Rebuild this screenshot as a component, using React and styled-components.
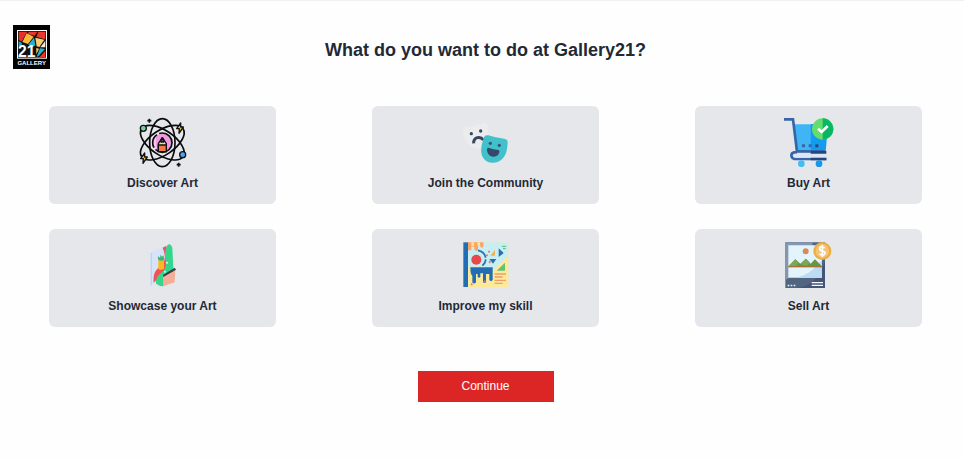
import React from "react";
import styled, { createGlobalStyle } from "styled-components";

const GlobalStyle = createGlobalStyle`
  *, *::before, *::after { box-sizing: border-box; }
  body {
    margin: 0;
    background: #fefefe;
    color: #1f2937;
    font-family: "Liberation Sans", Arial, sans-serif;
  }
`;

const Page = styled.main`
  border-top: 1px solid #f1f1f2;
  padding-bottom: 56px;
`;

const Header = styled.header`
  display: grid;
  grid-template-columns: 1fr auto 1fr;
  align-items: center;
  padding: 24px 6px 0 13px;
`;

const HomeLink = styled.a`
  display: block;
  width: 37px;
  height: 44px;
`;

const Title = styled.h1`
  margin: 5px 0 0;
  font-size: 18px;
  line-height: 28px;
  font-weight: 700;
`;

const Options = styled.section`
  display: grid;
  grid-template-columns: repeat(3, 1fr);
  gap: 25px 96px;
  padding: 37px 42px 0 49px;
`;

const OptionCard = styled.button`
  display: flex;
  flex-direction: column;
  align-items: center;
  gap: 6px;
  padding: 11px 8px 13px;
  border: 0;
  border-radius: 6px;
  background: #e5e7eb;
  color: inherit;
  font-family: inherit;
  font-size: 12px;
  line-height: 16px;
  font-weight: 700;
  cursor: pointer;
`;

const Artwork = styled.svg`
  display: block;
  width: 52px;
  height: 52px;
`;

const LogoArt = styled.svg`
  display: block;
  width: 100%;
  height: 100%;
`;

const Actions = styled.div`
  display: flex;
  justify-content: center;
  padding: 44px 42px 0 49px;
`;

const ContinueButton = styled.button`
  min-width: 136px;
  padding: 6px 40px 7px;
  border: 0;
  background: #dc2626;
  color: #fff;
  font-family: inherit;
  font-size: 12px;
  line-height: 18px;
  cursor: pointer;
`;

function Logo() {
  return (
    <LogoArt viewBox="39 30 111 132" aria-hidden="true">
      <rect x="39" y="30" width="111" height="132" fill="#000" />
      <rect x="51" y="45" width="90" height="86" fill="#fff" />
      <rect x="54" y="48" width="84" height="80" fill="#111" />
      <path d="M56 50h26L64 80l-8-6z" fill="#e53127" />
      <path d="M86 50h26l-8 12-20-5z" fill="#e8392b" />
      <path d="M115 50h21v23l-27-7z" fill="#e8392b" />
      <path d="M80 55l21 10-17 22-17-6z" fill="#fbb93c" />
      <path d="M56 78l10 7-3 10h-7z" fill="#21a9c8" />
      <path d="M85 89l17-21 4 23-9 6z" fill="#23b5d3" />
      <path d="M106 68l27 6-15 22-8-2z" fill="#f9cd72" />
      <path d="M136 77v20h-15z" fill="#f4ead2" />
      <path d="M109 99l8 2-8 17z" fill="#f9cd72" />
      <path d="M120 100l15 2-20 22-5 1z" fill="#25b7cf" />
      <path d="M136 107v19h-17z" fill="#e8392b" />
      <text x="54" y="126" fontFamily="Liberation Sans, Arial, sans-serif" fontWeight="700" fontSize="47" fill="#fff">21</text>
      <text x="95" y="150" textAnchor="middle" fontFamily="Liberation Sans, Arial, sans-serif" fontWeight="700" fontSize="18" fill="#fff">GALLERY</text>
    </LogoArt>
  );
}

function DiscoverArt() {
  return (
    <Artwork viewBox="20 20 156 156" aria-hidden="true">
      <circle cx="96" cy="97" r="27" fill="#f29ae0" />
      <path d="M76 78a27 27 0 0 0 3 40z" fill="#fac4ef" />
      <g fill="none" stroke="#0b0b0d" strokeWidth="5">
        <ellipse cx="96" cy="97" rx="38" ry="72" />
        <ellipse cx="96" cy="97" rx="37" ry="75" transform="rotate(56 96 97)" />
        <ellipse cx="96" cy="97" rx="37" ry="75" transform="rotate(-56 96 97)" />
        <circle cx="96" cy="97" r="29" strokeDasharray="68 7 44 7" />
      </g>
      <g stroke="#111" strokeWidth="4" strokeLinejoin="round">
        <path d="M84 124v-24l12-18 12 18v24z" fill="#f7d8b5" />
        <path d="M84 104h24v20H84z" fill="#f47b45" />
        <path d="M91 91l5-9 5 9-1 4h-8z" fill="#51417d" />
        <circle cx="39" cy="54" r="9" fill="#77d29a" />
        <circle cx="157" cy="133" r="9" fill="#4ea3ef" />
        <path d="M151 38l-12 17h8l-1 14 13-19h-8z" fill="#fbc332" />
        <path d="M43 128l-12 17h8l-1 14 13-19h-8z" fill="#fbc332" />
      </g>
      <path d="M57 25v12m-6-6h12M145 157v12m-6-6h12" stroke="#111" strokeWidth="5" fill="none" />
    </Artwork>
  );
}

function Community() {
  return (
    <Artwork viewBox="20 20 156 156" aria-hidden="true">
      <path d="M37 50q30-3 54-11 10-2 12 7l3 28-23 5-2 36q-29 3-43-23-9-18-9-34 0-7 8-8z" fill="#ececec" />
      <circle cx="54" cy="70" r="5" fill="#344864" />
      <circle cx="82" cy="62" r="5" fill="#344864" />
      <path d="M61 99q-1-13 11-17 11-3 18 7" fill="none" stroke="#344864" strokeWidth="9" />
      <path d="M105 75q24 8 47 10 12 2 11 12-1 31-13 45-13 16-34 15-21-1-30-21-7-16 5-52 3-12 14-9z" fill="#43c1ca" />
      <circle cx="111" cy="99" r="5" fill="#34557a" />
      <circle cx="138" cy="105" r="5" fill="#34557a" />
      <path d="M105 112q16 6 30 7 5 1 3 7-4 14-18 13-16-1-19-18-1-9 4-9z" fill="#34496c" />
    </Artwork>
  );
}

function BuyArt() {
  return (
    <Artwork viewBox="20 20 156 156" aria-hidden="true">
      <path d="M51 42h64v84H59z" fill="#40b5f5" />
      <path d="M103 42h52l-7 83h-45z" fill="#159bee" />
      <path d="M23 27h27l12 96h84" fill="none" stroke="#3666a7" strokeWidth="8" />
      <path d="M62 126h-9q-8 2-8 10 1 8 9 10h96" fill="none" stroke="#3666a7" strokeWidth="8" />
      <path d="M55 130h95v12H55z" fill="#dce7f3" />
      <path d="M103 126h47M103 146h47" stroke="#26457f" strokeWidth="8" />
      <circle cx="75" cy="160" r="10" fill="#43bdf4" />
      <circle cx="128" cy="160" r="10" fill="#1598e9" />
      <path d="M77 102h9v9h-9zm20 0h9v9h-9z" fill="#3666a7" />
      <path d="M117 102h9v9h-9z" fill="#26457f" />
      <circle cx="139" cy="56" r="32" fill="#64dc6e" />
      <path d="M139 24a32 32 0 0 1 0 64z" fill="#08b763" />
      <path d="M125 55l11 10 18-18" fill="none" stroke="#fff" strokeWidth="8" />
    </Artwork>
  );
}

function ShowcaseArt() {
  return (
    <Artwork viewBox="20 20 156 156" aria-hidden="true">
      <path d="M61 58l42-21v98l-42 22z" fill="#d5e3fb" />
      <path d="M61 58l4 2v94l-4 3z" fill="#bfd2f3" />
      <path d="M97 43l12-6-3 24 4 39-12 22-28 26q-3-30 13-43l16-17q10-17-2-45z" fill="#f45155" />
      <path d="M112 34q10-4 14 10l3 60-30 55q-11 0-22-8-1-22 14-31 18-12 15-36-6-30 6-50z" fill="#35d58d" />
      <path d="M84 79q8 4 17 0v27q-7 5-17 2z" fill="#fbb91b" />
      <path d="M82 69l8 4-1-9 6 6 5-4 1 14q-8 4-17 0z" fill="#38b777" />
      <path d="M98 129l37-22-2 40-35 12z" fill="#f4ad96" />
      <path d="M98 125l35-22 4 6-38 22z" fill="#343f4c" />
      <path d="M80 112l14 6-13 6q-5-7-1-12z" fill="#f45155" />
      <circle cx="104" cy="115" r="3" fill="#e9fff5" />
      <circle cx="110" cy="88" r="3" fill="#e9fff5" />
    </Artwork>
  );
}

function ImproveSkill() {
  return (
    <Artwork viewBox="20 20 156 156" aria-hidden="true">
      <path d="M30 27h135v134H30z" fill="#fcea9a" />
      <path d="M43 27h122v39l-54 53-14-19H43z" fill="#c8eef2" />
      <path d="M30 27h14v134H30z" fill="#236db5" />
      <path d="M44 27h46v13q-5 5-9 0v-5q-5-4-7 2v12q-6 6-11 0v-9h-9v11H44z" fill="#ffa363" />
      <path d="M54 27h8v12h-8zm18 0h8v9h-8z" fill="#fbe493" />
      <circle cx="69" cy="79" r="15" fill="#e8484b" />
      <path d="M74 51q23 5 23 27 0 12-10 19" fill="none" stroke="#276fb5" strokeWidth="5" strokeDasharray="34 4" />
      <path d="M51 102h67v38q-5 7-10 0v-18H98v24q-4 6-9 0v-26h-8v11q-4 5-8 0v-9h-5v25q-6 7-11 0v-20q-6-2-6-25z" fill="#236db5" />
      <path d="M125 49v18h-14z" fill="#f5b14d" />
      <path d="M136 45l15 14-15 12z" fill="#276fb5" />
      <path d="M108 77h21l-10 14z" fill="#276fb5" />
      <path d="M155 88v24h-25z" fill="#69be75" />
      <path d="M146 39h12M149 46h8" stroke="#58b978" strokeWidth="3" />
      <path d="M124 122h34M124 131h24M124 141h34M124 150h24" stroke="#ef9d69" strokeWidth="4" />
      <path d="M98 66h6m-3-3v6M106 86h7m-4-4v8M91 144h6m-3-3v6M52 153h6m-3-3v6M104 55h6m-3-3v6" stroke="#ec7469" strokeWidth="3" />
    </Artwork>
  );
}

function SellArt() {
  return (
    <Artwork viewBox="20 20 156 156" aria-hidden="true">
      <path d="M27 27h119v137H27z" fill="#526580" />
      <path d="M27 27h82q-3 71-82 113z" fill="#8397b0" />
      <path d="M146 83v81H63q60-7 83-81z" fill="#445576" />
      <path d="M36 36h101v97H36z" fill="#e4f4fd" />
      <path d="M137 80v53H60q43-9 77-53z" fill="#bddcf3" />
      <circle cx="88" cy="54" r="9" fill="#d98b53" />
      <path d="M36 99l21-21 15 13 16-15 15 15 13-13 21 21v3H36z" fill="#629846" />
      <path d="M36 99l21-21 10 10-9 12zm53-23 11 11-8 11-19-5z" fill="#78aa54" />
      <path d="M36 100h101" stroke="#b66a36" strokeWidth="3" />
      <path d="M34 154h5v5h-5zm9 0h5v5h-5zm9 0h5v5h-5z" fill="#eef6fc" />
      <path d="M106 148h34M106 156h34" stroke="#f6f8fa" strokeWidth="4" />
      <circle cx="138" cy="53" r="27" fill="#efad45" />
      <circle cx="138" cy="53" r="20" fill="#f5c577" />
      <path d="M145 43q-15-6-15 3 0 5 8 7 9 2 8 7-2 8-17 3M138 34v38" stroke="#fff" strokeWidth="5" fill="none" />
    </Artwork>
  );
}

const choices = [
  { label: "Discover Art", Icon: DiscoverArt },
  { label: "Join the Community", Icon: Community },
  { label: "Buy Art", Icon: BuyArt },
  { label: "Showcase your Art", Icon: ShowcaseArt },
  { label: "Improve my skill", Icon: ImproveSkill },
  { label: "Sell Art", Icon: SellArt },
];

export default function App() {
  return (
    <>
      <GlobalStyle />
      <Page>
        <Header>
          <HomeLink href="#" aria-label="Gallery21"><Logo /></HomeLink>
          <Title>What do you want to do at Gallery21?</Title>
        </Header>
        <Options>
          {choices.map(({ label, Icon }) => (
            <OptionCard type="button" key={label}>
              <Icon />
              <span>{label}</span>
            </OptionCard>
          ))}
        </Options>
        <Actions>
          <ContinueButton type="button">Continue</ContinueButton>
        </Actions>
      </Page>
    </>
  );
}
